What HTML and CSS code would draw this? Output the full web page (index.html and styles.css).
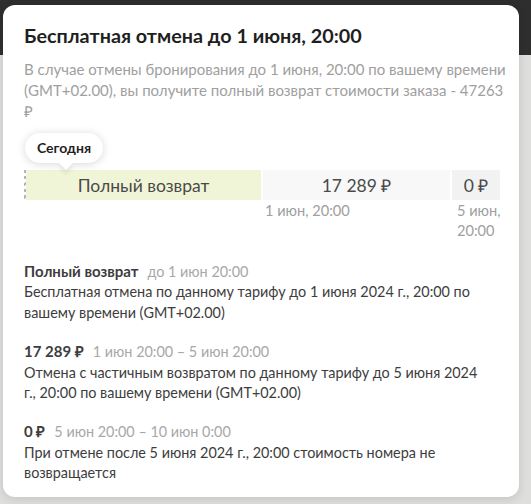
FILE: index.html
```html
<!DOCTYPE html>
<html lang="ru">
<head>
  <meta charset="UTF-8" />
  <title>Условия отмены</title>
  <link rel="stylesheet" href="styles.css">
</head>
<body>
  <div class="backdrop">
    <div class="popup">
      <h2 class="title">Бесплатная отмена до 1 июня, 20:00</h2>
      <p class="desc">В случае отмены бронирования до 1 июня, 20:00 по вашему времени (GMT+02.00), вы получите полный возврат стоимости заказа - 47263 ₽</p>

      <div class="timeline">
        <div class="today">Сегодня</div>
        <div class="bar">
          <div class="hatch"></div>
          <div class="seg seg-full">Полный возврат</div>
          <div class="seg seg-part">17 289 ₽</div>
          <div class="seg seg-none">0 ₽</div>
        </div>
        <div class="marks">
          <div class="mark mark-first"></div>
          <div class="mark mark-part">1 июн, 20:00</div>
          <div class="mark mark-none">5 июн, 20:00</div>
        </div>
      </div>

      <div class="rule">
        <div class="rule-head"><b>Полный возврат</b><span>до 1 июн 20:00</span></div>
        <p>Бесплатная отмена по данному тарифу до 1 июня 2024 г., 20:00 по вашему времени (GMT+02.00)</p>
      </div>
      <div class="rule">
        <div class="rule-head"><b>17 289 ₽</b><span>1 июн 20:00 – 5 июн 20:00</span></div>
        <p>Отмена с частичным возвратом по данному тарифу до 5 июня 2024 г., 20:00 по вашему времени (GMT+02.00)</p>
      </div>
      <div class="rule">
        <div class="rule-head"><b>0 ₽</b><span>5 июн 20:00 – 10 июн 0:00</span></div>
        <p>При отмене после 5 июня 2024 г., 20:00 стоимость номера не возвращается</p>
      </div>
    </div>
  </div>
</body>
</html>
```

FILE: styles.css
```css
* {
  margin: 0;
  padding: 0;
  box-sizing: border-box;
}

body {
  font-family: Lato, 'Liberation Sans', sans-serif;
  color: #3d3d3d;
  background: #dcdcda;
  overflow: hidden;
}

.backdrop {
  height: 504px;
  background: linear-gradient(#2e2e2e 0, #2e2e2e 55px, #dededc 55px, #dededc 100%);
  padding: 5px 12px 7px 3px;
}

.popup {
  background: #ffffff;
  border-radius: 12px;
  padding: 18px 19px 20px 21px;
  height: 492px;
  box-shadow: 0 2px 10px rgba(0, 0, 0, 0.12);
}

.title {
  font-size: 19.8px;
  font-weight: 700;
  color: #1f1f1f;
  line-height: 24px;
}

.desc {
  margin-top: 12px;
  margin-right: -7px;
  font-size: 15px;
  line-height: 21px;
  color: #a0a0a0;
}

.timeline {
  margin-top: 11px;
}

.today {
  position: relative;
  display: inline-block;
  margin-left: 1px;
  padding: 0 12px;
  height: 30px;
  line-height: 30px;
  border-radius: 15px;
  background: #ffffff;
  box-shadow: 0 1px 8px rgba(0, 0, 0, 0.16);
  font-size: 14px;
  font-weight: 700;
  color: #1f1f1f;
}

.today::after {
  content: "";
  position: absolute;
  left: 36px;
  bottom: -5px;
  width: 10px;
  height: 10px;
  background: #ffffff;
  transform: rotate(45deg);
  box-shadow: 3px 3px 4px rgba(0, 0, 0, 0.08);
}

.bar {
  display: flex;
  gap: 2px;
  height: 30px;
  margin-top: 7px;
}

.hatch {
  width: 2px;
  margin-right: -2px;
  background: repeating-linear-gradient(160deg, #b5b5b5 0, #b5b5b5 3px, transparent 3px, transparent 6px);
}

.seg {
  display: flex;
  align-items: center;
  justify-content: center;
  font-size: 17.5px;
  color: #4a4a4a;
}

.seg-full {
  width: 235px;
  background: #f0f5d7;
}

.seg-part {
  width: 187px;
  background: #f8f8f8;
}

.seg-none {
  flex: 1;
  background: #f2f2f2;
}

.marks {
  display: flex;
  gap: 2px;
  margin-top: 1px;
  font-size: 14.6px;
  line-height: 20px;
  color: #a0a0a0;
}

.mark-first {
  width: 237px;
}

.mark-part {
  width: 187px;
  padding-left: 2px;
}

.mark-none {
  flex: 1;
  padding-left: 5px;
  margin-right: -12px;
}

.rule {
  padding-right: 8px;
  font-size: 14.4px;
  line-height: 20.4px;
}

.rule + .rule {
  margin-top: 18px;
}

.timeline + .rule {
  margin-top: 20px;
}

.rule-head b {
  font-size: 15px;
  font-weight: 700;
  color: #3d3d3d;
  margin-right: 9px;
}

.rule-head span {
  color: #a8a8a8;
}
```
